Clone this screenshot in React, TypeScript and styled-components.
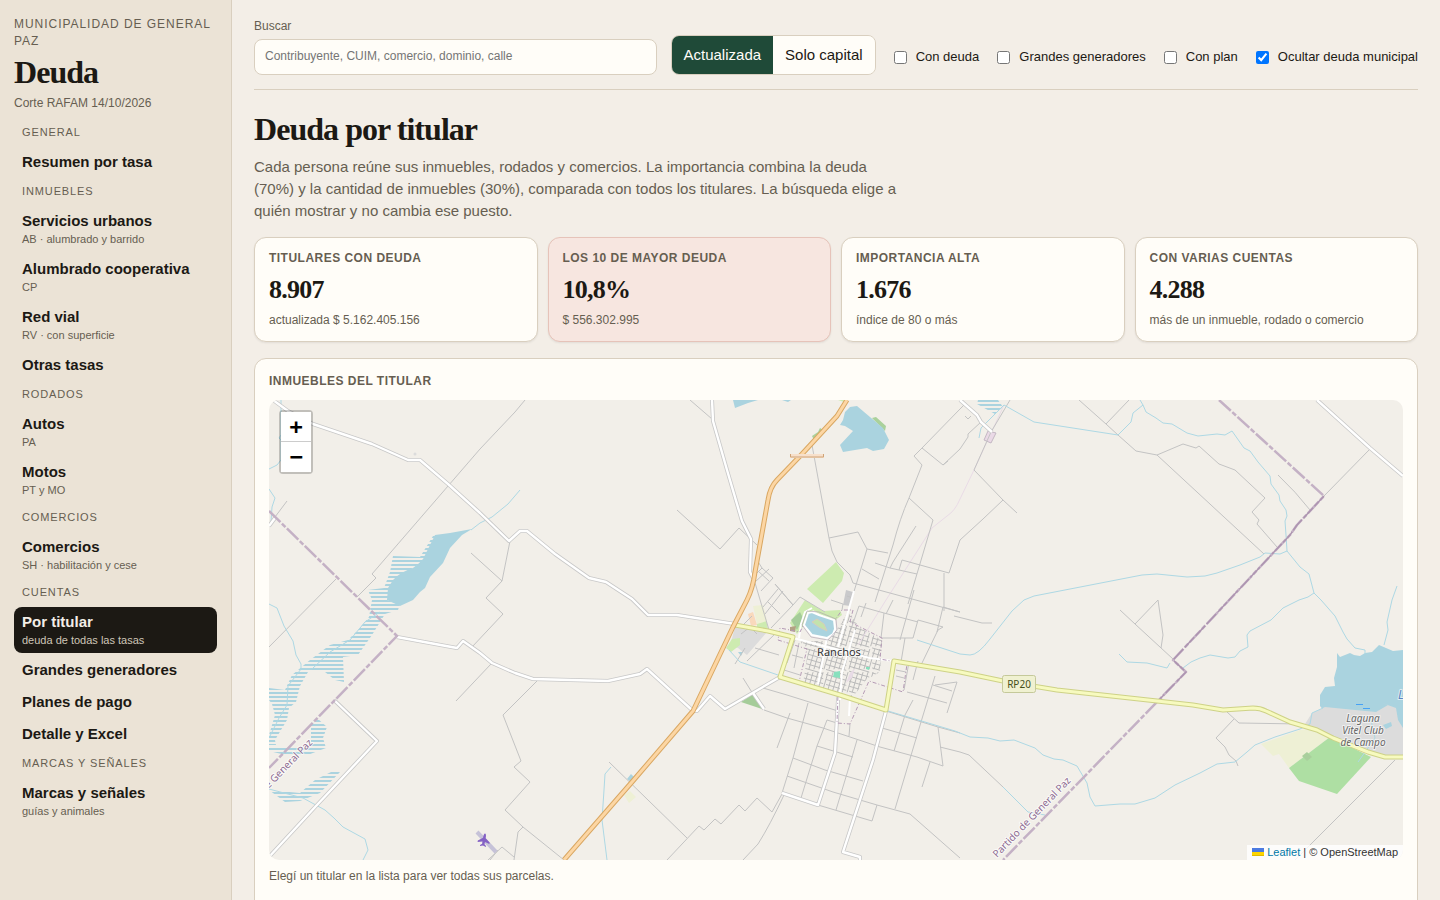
import React, { useState } from "react";
import styled, { createGlobalStyle } from "styled-components";

const color = {
  page: "#f3eee7",
  side: "#ebe3d6",
  card: "#fffdf8",
  ink: "#1c1914",
  muted: "#665e51",
  line: "#d9cfbf",
  green: "#1f4a38",
  alert: "#f7e6e0",
  alertLine: "#e6c3b9",
};

const sans = '"Liberation Sans", Arial, sans-serif';
const serif = '"Liberation Serif", Georgia, serif';

const GlobalStyle = createGlobalStyle`
  *, *::before, *::after { box-sizing: border-box; }
  body {
    margin: 0;
    background: ${color.page};
    color: ${color.ink};
    font: 15px/22px ${sans};
  }
`;

const Shell = styled.div`
  display: grid;
  grid-template-columns: 232px minmax(0, 1fr);
  min-height: 100vh;
`;

const Sidebar = styled.aside`
  position: sticky;
  top: 0;
  height: 100vh;
  overflow: hidden;
  padding: 16px 14px;
  background: ${color.side};
  border-right: 1px solid ${color.line};
`;

const Brand = styled.header`
  margin-bottom: 8px;
`;

const Org = styled.div`
  font-size: 12px;
  line-height: 17px;
  letter-spacing: 0.08em;
  text-transform: uppercase;
  color: ${color.muted};
`;

const Title = styled.div`
  font: bold 32px/36px ${serif};
  letter-spacing: -0.03em;
  margin: 4px 0 5px;
`;

const Note = styled.p`
  margin: 0;
  font-size: 12px;
  line-height: 17px;
  color: ${color.muted};
`;

const Nav = styled.nav`
  display: flex;
  flex-direction: column;
  gap: 2px;
`;

const NavHeading = styled.div`
  padding: 4px 8px;
  font-size: 11px;
  line-height: 17px;
  letter-spacing: 0.08em;
  text-transform: uppercase;
  color: ${color.muted};
`;

const NavLink = styled.a<{ $active?: boolean }>`
  display: block;
  padding: 5px 8px;
  border-radius: 8px;
  font-weight: bold;
  line-height: 20px;
  text-decoration: none;
  color: ${(p) => (p.$active ? color.page : color.ink)};
  background: ${(p) => (p.$active ? color.ink : "transparent")};

  small {
    display: block;
    font-size: 11px;
    font-weight: normal;
    line-height: 16px;
    color: ${(p) => (p.$active ? "#cfc6b8" : color.muted)};
  }
`;

const Main = styled.main`
  padding: 18px 22px 32px;
`;

const Toolbar = styled.form`
  display: flex;
  align-items: flex-end;
  gap: 14px;
  padding-bottom: 14px;
  border-bottom: 1px solid ${color.line};
`;

const SearchField = styled.label`
  display: flex;
  flex: 1;
  flex-direction: column;
  gap: 4px;
  font-size: 12px;
  line-height: 17px;
  color: ${color.muted};
`;

const SearchInput = styled.input`
  width: 100%;
  height: 36px;
  padding: 0 10px 2px;
  border: 1px solid ${color.line};
  border-radius: 8px;
  background: ${color.card};
  font: 12px ${sans};
  color: ${color.ink};
`;

const Segment = styled.div`
  display: flex;
  overflow: hidden;
  border: 1px solid ${color.line};
  border-radius: 8px;
`;

const SegmentButton = styled.button<{ $on: boolean }>`
  height: 38px;
  padding: 0 12px 2px;
  border: 0;
  font: 15px ${sans};
  color: ${(p) => (p.$on ? color.card : color.ink)};
  background: ${(p) => (p.$on ? color.green : color.card)};
`;

const Check = styled.label`
  display: flex;
  align-items: center;
  gap: 6px;
  height: 36px;
  font-size: 13px;
  white-space: nowrap;
`;

const Heading = styled.h1`
  margin: 19px 0 7px;
  font: bold 32px/40px ${serif};
  letter-spacing: -0.03em;
`;

const Lead = styled.p`
  max-width: 650px;
  margin: 0 0 15px;
  color: ${color.muted};
`;

const Stats = styled.section`
  display: grid;
  grid-template-columns: repeat(4, minmax(0, 1fr));
  gap: 10px;
  margin-bottom: 16px;
`;

const Card = styled.article<{ $alert?: boolean }>`
  display: flex;
  flex-direction: column;
  gap: 8px;
  padding: 12px 14px;
  border: 1px solid ${(p) => (p.$alert ? color.alertLine : color.line)};
  border-radius: 12px;
  background: ${(p) => (p.$alert ? color.alert : color.card)};
  box-shadow: 0 1px 2px rgba(28, 25, 20, 0.08);
`;

const Label = styled.h2`
  margin: 0;
  font-size: 12px;
  font-weight: bold;
  line-height: 17px;
  letter-spacing: 0.04em;
  text-transform: uppercase;
  color: ${color.muted};
`;

const Value = styled.strong`
  padding-top: 1px;
  font: bold 26px/28px ${serif};
  letter-spacing: -0.03em;
`;

const Panel = styled.section`
  display: flex;
  flex-direction: column;
  padding: 14px 14px 32px;
  border: 1px solid ${color.line};
  border-radius: 12px;
  background: ${color.card};
`;

const MapFrame = styled.div`
  position: relative;
  height: 460px;
  margin: 10px 0 8px;
  overflow: hidden;
  border-radius: 10px;
  background: #f2efe9;

  > svg {
    display: block;
    width: 100%;
    height: 100%;
  }
`;

const Zoom = styled.div`
  position: absolute;
  top: 10px;
  left: 10px;
  border: 2px solid rgba(0, 0, 0, 0.2);
  border-radius: 4px;
  background-clip: padding-box;
`;

const ZoomButton = styled.button`
  display: block;
  width: 30px;
  height: 30px;
  padding: 0;
  border: 0;
  background: #fff;
  font: bold 22px/30px "DejaVu Sans Mono", monospace;
  color: #000;

  & + & {
    box-shadow: 0 -1px #ccc;
  }
`;

const Attribution = styled.div`
  position: absolute;
  right: 0;
  bottom: 0;
  padding: 0 5px;
  background: rgba(255, 255, 255, 0.8);
  font-size: 11px;
  line-height: 15px;
  color: #333;

  a {
    color: #0078a8;
    text-decoration: none;
  }
`;

/* Map layers, as path data */

const tracks = [
  "M525 400L515 412L480 449L372 574L376 578L357 597",
  "M336 579L269 647M287 501L275 517M471 553L502 581L510 541M502 581L486 598L503 614L472 647M491 664L456 701",
  "M538 680L503 715L521 761L514 767L530 782L505 810L523 827L564 860M523 827L518 832L514 860M488 860L502 847L514 857M490 860L498 850",
  "M609 762L687 838M667 860L699 826L704 830L715 819L721 824L739 805L745 811L757 798L772 812L782 794M784 795Q770 825 758 844L743 860",
  "M690 400L712 419M677 510L720 549L739 528L757 545",
  "M812 445L829 538L832 551L837 562L850 575L853 583L960 612M829 538L858 532L867 549L888 553M867 549L852 598",
  "M960 409L922 448L914 456L922 465L909 498Q900 518 893 545L875 602M922 448L943 465L960 449M943 465L948 461",
  "M909 498L933 520L908 604M916 526L893 562L890 568M875 563L890 568L917 574M899 570L902 560L949 573L960 540L983 519L1003 500L974 470L991 432L1010 400M1003 500L1017 513M862 569L879 579M944 573L944 611",
  "M960 449L968 437L968 434L981 422M960 409L964 405M965 416L968 419L971 416",
  "M1079 400L1106 424L1118 435L1136 451L1157 455L1183 444L1196 448L1199 446L1219 464L1235 470L1265 498L1252 512L1259 520L1257 524L1277 547M1129 400L1106 424M1157 455L1264 554M1278 475Q1296 492 1310 510M1370 449L1324 496",
  "M954 616L982 623L992 623M1120 610L1135 624L1158 600L1163 635L1161 648M1135 624L1173 659",
  "M1227 712L1239 723L1300 724M1234 719L1216 738L1225 747L1229 755L1236 761L1238 766M1395 760L1295 860M960 752L969 755L1003 787",
  "M764 710L787 718L823 728L880 747L917 757L943 766L938 727M817 746L853 757M793 758L825 770L863 781M787 776L833 792L877 805L910 814L960 858M818 805L872 821L877 805",
  "M837 723L827 720L817 746L801 798M857 740L852 757L836 810M808 703L793 758L782 793M790 713L777 748M763 688L787 695L838 711M850 724L849 736",
  "M886 711L938 727L960 733M882 728L917 738M913 700L905 715L894 751M957 682L935 685M957 682L947 713M935 676L921 722L895 809M930 762L922 787M940 747L960 752M907 692L947 703M933 685L952 691",
  "M882 638L913 638L918 620L943 627L938 630L922 663M905 638L901 662M859 606L884 613L918 622M884 613L881 638M914 590L900 640M960 612L943 607L937 632M859 606L850 632M893 600L886 614M918 661L913 680M866 603L861 617",
  "M757 560L762 568L773 578L761 591M755 582L769 569M762 568L753 577M758 571L769 581M753 576L769 630M793 605L775 584L793 605L771 628M763 607L778 589M765 614L783 591M793 605L800 597L825 612M768 602L780 614",
  "M755 648L779 655M747 661L776 633M744 624L752 616M743 678L753 694M745 648L735 664M741 634L750 627L757 634",
  "M795 640L787 663M799 643L794 668M792 655L803 658M784 670L800 675M896 670L906 672M896 676L904 678M909 662L904 690M831 600L843 604L842 610M847 596L853 598",
];

const creeks = [
  "M269 604L277 608L284 626L293 641L296 655L301 664L301 669L312 669L330 652L350 640L365 622L380 612M301 669L288 686L287 705L279 718L269 738",
  "M281 400L281 460L277 465L269 469M281 435L279 438L281 440M269 489L275 498L272 507L271 522",
  "M471 530L480 523L492 517L508 504L520 490",
  "M269 789L303 798L325 810L334 818L343 827L365 839L368 850L363 860",
  "M979 438L981 428L1004 405L1034 422L1118 435L1131 422L1133 413L1143 405L1140 400",
  "M1143 405L1146 412L1156 418L1163 423L1172 424L1187 433L1198 436L1217 434L1225 435L1232 431L1244 448L1250 451L1258 462L1270 476L1271 484L1279 495L1280 501L1286 510L1287 516L1285 521L1286 535L1287 551L1300 567L1309 574L1314 593L1321 600L1335 616L1343 632L1347 639L1355 648L1365 650L1365 654",
  "M1287 551L1280 554L1265 553L1260 557L1240 565L1217 573L1205 576L1187 577L1157 574L1142 575L1034 596L1024 600L1012 611L990 639Q978 655 970 655L960 654L917 640",
  "M1314 593L1308 597L1299 600L1283 608L1271 620L1250 631L1247 635L1248 647L1240 651L1235 657L1228 658L1210 655L1200 658L1191 662L1183 668",
  "M1119 654L1127 662L1147 663L1167 668L1170 663M1397 586L1392 600L1387 622L1388 630L1384 645",
  "M888 711L955 731L970 737L988 738L1000 741L1014 740L1035 748L1043 755L1054 759L1063 760L1077 766L1087 783L1090 797L1095 806L1120 804L1135 804L1155 798L1175 785L1200 773L1217 764L1235 762L1247 752L1255 745L1275 737L1300 729L1310 724L1312 713L1323 708",
  "M1003 787L1028 812L1045 815M611 767L605 774L604 790L602 820L607 860M729 650L740 662L778 675M1371 720L1375 738L1358 762",
];

const ruralRoads = [
  "M273 400L288 411L313 424L372 444L408 460L420 460L448 484L480 513L509 541L520 531L527 531L555 554L589 578L606 582L632 599L648 615L677 615L735 624",
  "M712 400L713 421L727 470L742 521L751 539L750 572L753 578",
  "M397 637L457 648L463 641L480 653L492 663L515 673L533 679L608 681L640 674L647 669L692 710L697 711L710 696L725 709L780 677M753 693L764 709",
  "M334 700L377 741L316 806L269 857M269 526L275 518M1317 400L1370 448L1403 476M960 400L977 415L981 422L992 432",
  "M782 793L818 805L835 753L838 700L840 690M886 711L873 760L843 852L860 857L860 860",
];

const avenues =
  "M790 637L827 647L870 658L893 661M854 591L838 647M855 630L842 672L840 700M827 638L818 684M799 638L801 624L805 612L812 608M850 698L849 716";

const orangeRoad =
  "M847 400L837 416L802 454L777 480Q770 487 768 500L755 572Q753 588 747 600L733 627L693 711L632 782L564 860";

const yellowRoad =
  "M735 625L768 631L793 637L780 677L840 695L886 710L894 661L960 672L1003 681L1057 690L1157 701L1193 705L1223 710L1253 708Q1260 708 1266 711L1290 722L1317 730L1333 738L1368 752L1385 757L1403 757";

const marshes = [
  "M393 556L420 557L433 536L440 536L425 560L395 580L387 600L400 604L398 610L385 614L372 635L358 655L343 657L344 682L335 680L325 672L308 672L300 686L296 702L289 708L287 720L275 740L276 745L269 745L269 735L275 715L272 704L269 700L269 688L285 690L292 675L310 660L330 645L348 640L358 630L369 617L372 600L368 590L384 588L390 572Z",
  "M318 719L327 727L323 738L326 748L305 756L290 756L269 751L269 747L311 746L311 725Z",
  "M333 771L340 772L320 793L300 801L285 802L269 790L300 793L315 780Z",
  "M978 400L998 400L1003 407L995 414L977 404Z",
];

const lakes = [
  "M435 535L450 533L472 529L462 535L450 548L443 563L430 577L425 588L420 592L413 600L400 606L387 600L388 588L393 580Q400 572 413 568Q424 560 425 555Z",
  "M840 445L853 431L845 426L840 425L843 420L845 412L850 407L857 406L883 428L889 440L884 449L873 451L867 448L843 452Z",
  "M733 400L758 400L748 403L735 408ZM782 400L791 400L788 402ZM627 779L631 774L635 778L631 782ZM738 652L743 652L741 656Z",
  "M1337 653L1340 657L1350 653L1354 655L1360 656L1365 653L1372 652L1379 645L1393 651L1403 650L1403 735L1325 712L1320 706L1320 695L1325 687L1335 686L1334 678L1337 667Z",
];

const boundaries = "M269 511L397 636L269 768M1219 400L1324 496L1297 525L1290 535L1173 660L1186 672L1157 702L1003 860";

const townLimit =
  "M778 640L807 649L799 682L838 694L837 723L850 724L869 681L903 692L907 664L880 659L882 638L850 622L853 610L842 610L835 620L810 612L800 632L780 628Z";

/* Street blocks of the town: two sets of parallel lines, clipped to its outline */
const blocks = Array.from({ length: 34 }, (_, i) => {
  const y = 556 + i * 5;
  const x = 780 + i * 5;
  return `M780 ${y}l130 38M${x} 580l-38 130`;
}).join("");

function TownMap() {
  return (
    <svg viewBox="269 400 1134 460" preserveAspectRatio="xMidYMid slice" role="img" aria-label="Mapa de Ranchos">
      <defs>
        <pattern id="marsh" width="8" height="4" patternUnits="userSpaceOnUse">
          <rect width="8" height="2" fill="#aad3df" />
        </pattern>
        <clipPath id="town">
          <path d="M848 612L860 628L882 640L880 672L866 680L852 698L803 683L808 652L800 641L828 641L840 625Z" />
        </clipPath>
      </defs>

      <path fill="#aad19b" d="M872 418L876 417L886 426L885 431ZM812 436L818 432L820 428L823 430L820 436L814 440Z" />
      <path fill="#cdebb0" d="M807 589L836 562L844 573L842 581L823 603ZM790 623L805 600L823 611L840 610L842 615L833 622L813 610L802 628L797 634ZM838 400L846 400L844 402ZM757 623L766 619L768 629L757 628Z" />
      <path fill="#dcdcdc" d="M735 627L767 632L747 655L738 648L730 646Z" />
      <path fill="#cdebb0" d="M732 639L740 638L740 645L731 652L726 648Z" />
      <path fill="#eef0d5" d="M753 606L763 605L767 621L757 624ZM624 795L630 791L636 797L629 803Z" />
      <path fill="#f9d9bc" d="M748 614L753 612L757 625L751 626Z" />
      <path fill="#a5cc99" d="M791 620L800 612L803 618L797 630ZM741 702L753 694L762 709Z" />
      <path fill="#b3a184" d="M790 627L796 626L795 632L790 631Z" />
      <path fill="url(#marsh)" d={marshes.join("")} />
      <path fill="#aad3df" d={lakes.join("")} />
      <path fill="#eef0d5" d="M1261 744L1300 730L1317 729L1330 737L1289 768L1279 754L1273 756Z" />
      <path fill="#aedfa3" d="M1289 768L1330 737L1371 757L1337 794L1299 781Z" />
      <path fill="#a9cf9c" d="M1302 756L1307 752L1312 757L1307 761Z" />
      <path fill="#dcdcdc" d="M1305 724L1312 713L1325 707L1345 709L1376 712L1388 705L1382 703L1396 708L1398 720L1403 728L1403 757L1385 757L1340 740L1317 730Z" />
      <path fill="#aad3df" d="M1383 725L1391 722L1392 726L1386 729Z" />
      <path fill="none" stroke="#46a2f5" d="M1356 704.500h7M1363 708.500h7" />

      <path fill="none" stroke="#bababa" strokeDasharray="21 3" clipPath="url(#town)" d={blocks} />
      <path fill="#c9c9cb" d="M846 590L853 592L850 606L843 605Z" />
      <path fill="#88e0be" d="M834 672L840 671L840 678L833 677ZM866 667L870 667L869 670L866 669Z" />
      <path fill="#e8dbe6" d="M850 673L855 668L852 678L846 683Z" />
      <path fill="none" stroke="#e9dbe6" d="M1004 405L974 470L960 499Q955 511 947 516L932 528L886 600L858 645" />
      <path fill="#ead9e6" stroke="#c4b8c4" d="M984 440L988 431L996 433L991 443Z" />
      <path fill="none" stroke="#c3c3c3" d={tracks.join("")} />
      <path fill="none" stroke="#add8e4" d={creeks.join("")} />

      <g fill="none" strokeLinejoin="round">
        <path stroke="#c8c8c8" strokeWidth="4" d={ruralRoads.join("")} />
        <path stroke="#fff" strokeWidth="2.400" d={ruralRoads.join("")} />
        <path stroke="#fff" strokeWidth="2" d={avenues} />
        <path stroke="#c4b1c5" strokeWidth="2.500" strokeDasharray="16 2 5 2" d={boundaries} />
        <path stroke="#ad94b0" strokeWidth="1.500" strokeDasharray="14 2" d="M1324 496L1297 525L1290 535L1173 660L1186 672L1157 702" />
        <path stroke="#b59ab5" strokeDasharray="4 2 1 2" d={townLimit} />
        <path stroke="#ced287" strokeWidth="5" d={yellowRoad} />
        <path stroke="#f7fabf" strokeWidth="3" d={yellowRoad} />
        <path stroke="#d9a762" strokeWidth="5" d={orangeRoad} />
        <path stroke="#fcd6a4" strokeWidth="3" d={orangeRoad} />
      </g>

      <path fill="#aad3df" stroke="#fff" strokeWidth="2" d="M808 613L812 612L819 615L834 620L835 629L833 634L827 638L812 635L804 625Z" />
      <path fill="none" stroke="#a99bad" strokeWidth=".6" d="M807 611L819 612L836 619L837 630L828 640L811 637L802 625Z" />
      <path fill="#c3e3ac" stroke="#d8cdbb" d="M812 622L817 619L824 624L827 631L819 627Z" />
      <path fill="#f7e0cb" d="M790 454h34v4h-34z" />
      <path fill="none" stroke="#cfa377" d="M790.500 454v3h33v-3" />

      <path stroke="#c6c2d8" strokeWidth="4" d="M477 832L496 852" />
      <path
        fill="#8461c4"
        transform="rotate(10 484 840)"
        d="M484 833.500Q485.500 834 485.300 838L490 841.500V843L485.300 841.700L485.200 844L487 845.500V846.500L484 845.700L481 846.500V845.500L482.800 844L482.700 841.700L478 843V841.500L482.700 838Q482.500 834 484 833.500Z"
      />
      <circle cx="415" cy="454" r="1.500" fill="#dcdcdc" />

      <rect x="1002.500" y="675.500" width="33" height="17" rx="2" fill="#f0f1d1" stroke="#c5c99a" />
      <g fontFamily="'Noto Sans', sans-serif" fontSize="10" paintOrder="stroke" strokeLinejoin="round">
        <text x="1019" y="688" textAnchor="middle" fill="#46501a">RP20</text>
        <text x="839" y="656" fontSize="11" textAnchor="middle" textRendering="geometricPrecision" fill="#333" stroke="#fff" strokeOpacity=".6" strokeWidth="2">Ranchos</text>
        <g fontStyle="italic" textAnchor="middle" fill="#666" stroke="#fff" strokeOpacity=".6" strokeWidth="2">
          <text x="1363" y="722">Laguna</text>
          <text x="1363" y="734">Vitel Club</text>
          <text x="1363" y="746">de Campo</text>
        </g>
        <text x="1398" y="699" fontSize="12" fontStyle="italic" fill="#5b86c0" stroke="#fff" strokeOpacity=".6" strokeWidth="2">L</text>
        <g fill="#8d6a91" stroke="#fff" strokeOpacity=".7" strokeWidth="2">
          <text transform="translate(997 858) rotate(-46)">Partido de General Paz</text>
          <text transform="translate(313 743) rotate(-46)" textAnchor="end">e General Paz</text>
        </g>
      </g>
    </svg>
  );
}

type Item = { name: string; note?: string };

const menu: { group: string; items: Item[] }[] = [
  { group: "General", items: [{ name: "Resumen por tasa" }] },
  {
    group: "Inmuebles",
    items: [
      { name: "Servicios urbanos", note: "AB · alumbrado y barrido" },
      { name: "Alumbrado cooperativa", note: "CP" },
      { name: "Red vial", note: "RV · con superficie" },
      { name: "Otras tasas" },
    ],
  },
  { group: "Rodados", items: [{ name: "Autos", note: "PA" }, { name: "Motos", note: "PT y MO" }] },
  { group: "Comercios", items: [{ name: "Comercios", note: "SH · habilitación y cese" }] },
  {
    group: "Cuentas",
    items: [
      { name: "Por titular", note: "deuda de todas las tasas" },
      { name: "Grandes generadores" },
      { name: "Planes de pago" },
      { name: "Detalle y Excel" },
    ],
  },
  { group: "Marcas y señales", items: [{ name: "Marcas y señales", note: "guías y animales" }] },
];

const stats = [
  { label: "Titulares con deuda", value: "8.907", note: "actualizada $ 5.162.405.156" },
  { label: "Los 10 de mayor deuda", value: "10,8%", note: "$ 556.302.995", alert: true },
  { label: "Importancia alta", value: "1.676", note: "índice de 80 o más" },
  { label: "Con varias cuentas", value: "4.288", note: "más de un inmueble, rodado o comercio" },
];

const filters = [
  { name: "Con deuda", on: false },
  { name: "Grandes generadores", on: false },
  { name: "Con plan", on: false },
  { name: "Ocultar deuda municipal", on: true },
];

const modes = ["Actualizada", "Solo capital"];

export default function App() {
  const [mode, setMode] = useState(modes[0]);

  return (
    <>
      <GlobalStyle />
      <Shell>
        <Sidebar>
          <Brand>
            <Org>Municipalidad de General Paz</Org>
            <Title>Deuda</Title>
            <Note>Corte RAFAM 14/10/2026</Note>
          </Brand>
          <Nav aria-label="Secciones">
            {menu.map(({ group, items }) => (
              <React.Fragment key={group}>
                <NavHeading>{group}</NavHeading>
                {items.map(({ name, note }) => (
                  <NavLink key={name} href="#" $active={name === "Por titular"}>
                    {name}
                    {note && <small>{note}</small>}
                  </NavLink>
                ))}
              </React.Fragment>
            ))}
          </Nav>
        </Sidebar>

        <Main>
          <Toolbar>
            <SearchField>
              Buscar
              <SearchInput type="search" placeholder="Contribuyente, CUIM, comercio, dominio, calle" />
            </SearchField>
            <Segment role="group" aria-label="Tipo de deuda">
              {modes.map((m) => (
                <SegmentButton key={m} type="button" $on={m === mode} aria-pressed={m === mode} onClick={() => setMode(m)}>
                  {m}
                </SegmentButton>
              ))}
            </Segment>
            {filters.map(({ name, on }) => (
              <Check key={name}>
                <input type="checkbox" defaultChecked={on} />
                {name}
              </Check>
            ))}
          </Toolbar>

          <Heading>Deuda por titular</Heading>
          <Lead>
            Cada persona reúne sus inmuebles, rodados y comercios. La importancia combina la deuda (70%) y la cantidad
            de inmuebles (30%), comparada con todos los titulares. La búsqueda elige a quién mostrar y no cambia ese
            puesto.
          </Lead>

          <Stats>
            {stats.map(({ label, value, note, alert }) => (
              <Card key={label} $alert={alert}>
                <Label>{label}</Label>
                <Value>{value}</Value>
                <Note>{note}</Note>
              </Card>
            ))}
          </Stats>

          <Panel>
            <Label>Inmuebles del titular</Label>
            <MapFrame>
              <TownMap />
              <Zoom>
                <ZoomButton type="button" aria-label="Acercar">+</ZoomButton>
                <ZoomButton type="button" aria-label="Alejar">−</ZoomButton>
              </Zoom>
              <Attribution>
                <a href="https://leafletjs.com">
                  <svg width="12" height="8" viewBox="0 0 12 8" aria-hidden="true">
                    <path fill="#4C7BE1" d="M0 0h12v4H0z" />
                    <path fill="#FFD500" d="M0 4h12v3H0z" />
                    <path fill="#E0BC00" d="M0 7h12v1H0z" />
                  </svg>{" "}
                  Leaflet
                </a>{" "}
                | © OpenStreetMap
              </Attribution>
            </MapFrame>
            <Note>Elegí un titular en la lista para ver todas sus parcelas.</Note>
          </Panel>
        </Main>
      </Shell>
    </>
  );
}
